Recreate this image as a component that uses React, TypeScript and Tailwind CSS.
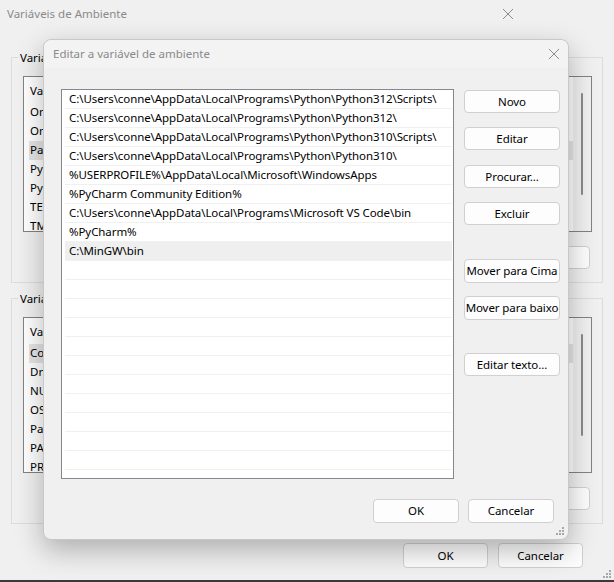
import React from 'react';

const font = { fontFamily: '"Segoe UI", "Noto Sans", "Liberation Sans", sans-serif' };

const paths = [
  'C:\\Users\\conne\\AppData\\Local\\Programs\\Python\\Python312\\Scripts\\',
  'C:\\Users\\conne\\AppData\\Local\\Programs\\Python\\Python312\\',
  'C:\\Users\\conne\\AppData\\Local\\Programs\\Python\\Python310\\Scripts\\',
  'C:\\Users\\conne\\AppData\\Local\\Programs\\Python\\Python310\\',
  '%USERPROFILE%\\AppData\\Local\\Microsoft\\WindowsApps',
  '%PyCharm Community Edition%',
  'C:\\Users\\conne\\AppData\\Local\\Programs\\Microsoft VS Code\\bin',
  '%PyCharm%',
  'C:\\MinGW\\bin',
];

const userVars = ['Variável', 'OneDrive', 'OneDriveConsumer', 'Path', 'PyCharm', 'PyCharm Community Edition', 'TEMP', 'TMP'];
const sysVars = ['Variável', 'ComSpec', 'DriverData', 'NUMBER_OF_PROCESSORS', 'OS', 'Path', 'PATHEXT', 'PROCESSOR_ARCHITECTURE'];

const CloseIcon = () => (
  <svg width="12" height="12" viewBox="0 0 12 12" className="text-[#8a8a8a] shrink-0">
    <path d="M1 1 L11 11 M11 1 L1 11" stroke="currentColor" strokeWidth="1" fill="none" />
  </svg>
);

const Grip = () => (
  <svg width="8" height="8" viewBox="0 0 8 8" className="text-[#a8a8a8]">
    <rect x="6" y="0" width="2" height="2" fill="currentColor" />
    <rect x="3" y="3" width="2" height="2" fill="currentColor" />
    <rect x="6" y="3" width="2" height="2" fill="currentColor" />
    <rect x="0" y="6" width="2" height="2" fill="currentColor" />
    <rect x="3" y="6" width="2" height="2" fill="currentColor" />
    <rect x="6" y="6" width="2" height="2" fill="currentColor" />
  </svg>
);

const Button = ({ label, className = '' }: { label: string; className?: string }) => (
  <button className={`h-[23px] shrink-0 rounded-[4px] border border-[#d0d0d0] bg-[#fdfdfd] text-[11.5px] tracking-[-0.08px] text-black leading-none whitespace-nowrap px-0 ${className}`}>
    {label}
  </button>
);

const BgList = ({ items, selected }: { items: string[]; selected: number }) => (
  <div className="ml-[11px] mr-[10px] h-[156px] shrink-0 border border-[#828282] bg-white flex">
    <div className="flex-1 flex flex-col pt-[5px] pl-[5px] overflow-hidden">
      {items.map((it, i) => (
        <div key={i} className={`h-[19px] shrink-0 flex items-center pl-[1px] text-[11.5px] text-black whitespace-nowrap ${i === selected ? 'bg-[#e5e5e5]' : ''} ${i === 0 ? 'mb-[2px]' : ''}`}>
          {it}
        </div>
      ))}
    </div>
    <div className="w-[18px] bg-[#f0f0f0] flex justify-center pt-[16px]">
      <div className="w-[2px] h-[102px] bg-[#8a8a8a] rounded" />
    </div>
  </div>
);

const Group = ({ title, items, selected }: { title: string; items: string[]; selected: number }) => (
  <fieldset className="border border-[#dcdcdc] mx-[11px] h-[231px] pt-[12px] flex flex-col">
    <legend className="ml-[6px] px-[2px] text-[11.5px] text-black leading-none">{title}</legend>
    <BgList items={items} selected={selected} />
    <div className="flex justify-end mr-[12px] mt-[14px]">
      <Button label="Excluir" className="w-[85px] bg-[#f4f4f4]" />
    </div>
  </fieldset>
);

const EditDialog = () => (
  <div className="absolute left-[43px] top-[39px] w-[526px] h-[501px] rounded-[8px] border border-[#c8c8c8] bg-[#f0f0f0] shadow-[0_10px_28px_rgba(0,0,0,0.28)] flex flex-col">
    <div className="h-[28px] shrink-0 flex items-center justify-between pl-[9px] pr-[8px] rounded-t-[8px] bg-[#f3f3f3]">
      <span className="text-[11.5px] text-[#8a8a8a]">Editar a variável de ambiente</span>
      <CloseIcon />
    </div>
    <div className="flex pl-[17px] pt-[21px]">
      <div className="w-[393px] h-[390px] shrink-0 border border-[#828790] bg-white overflow-hidden">
        {Array.from({ length: 22 }).map((_, i) => (
          <div key={i} className="pl-[3px] pr-[1px]">
            <div className={`h-[19px] flex items-center pl-[4px] border-b border-[#f0f0f0] text-[11.5px] tracking-[-0.08px] text-black whitespace-nowrap ${i === 8 ? 'bg-[#efefef]' : ''}`}>
              {paths[i] ?? ''}
            </div>
          </div>
        ))}
      </div>
      <div className="ml-[10px] w-[96px] flex flex-col pt-[1px]">
        <Button label="Novo" className="w-full" />
        <Button label="Editar" className="w-full mt-[14px]" />
        <Button label="Procurar..." className="w-full mt-[15px]" />
        <Button label="Excluir" className="w-full mt-[14px]" />
        <Button label="Mover para Cima" className="w-full mt-[34px] h-[24px]" />
        <Button label="Mover para baixo" className="w-full mt-[13px] h-[24px]" />
        <Button label="Editar texto..." className="w-full mt-[33px]" />
      </div>
    </div>
    <div className="flex justify-end gap-[9px] pr-[14px] mt-[20px]">
      <Button label="OK" className="w-[86px] h-[24px]" />
      <Button label="Cancelar" className="w-[86px] h-[24px]" />
    </div>
    <div className="flex justify-end pr-[4px] mt-auto pb-[4px]">
      <Grip />
    </div>
  </div>
);

export default function App() {
  return (
    <div className="relative w-[614px] h-[582px] bg-[#f0f0f0] overflow-hidden border-b-2 border-[#3a3a3a] flex flex-col" style={font}>
      <div className="h-[28px] flex items-center justify-between pl-[7px] pr-[100px] shrink-0">
        <span className="text-[11.5px] text-[#8a8a8a]">Variáveis de Ambiente</span>
        <CloseIcon />
      </div>
      <div className="mt-[24px]">
        <Group title="Variáveis de usuário para conne" items={userVars} selected={3} />
      </div>
      <div className="mt-[10px]">
        <Group title="Variáveis do sistema" items={sysVars} selected={1} />
      </div>
      <div className="flex justify-end gap-[10px] pr-[31px] mt-[19px]">
        <Button label="OK" className="w-[85px] h-[25px] bg-[#f4f4f4]" />
        <Button label="Cancelar" className="w-[85px] h-[25px] bg-[#f4f4f4]" />
      </div>
      <div className="flex justify-end pr-[3px] mt-auto pb-[2px]">
        <Grip />
      </div>
      <EditDialog />
    </div>
  );
}
